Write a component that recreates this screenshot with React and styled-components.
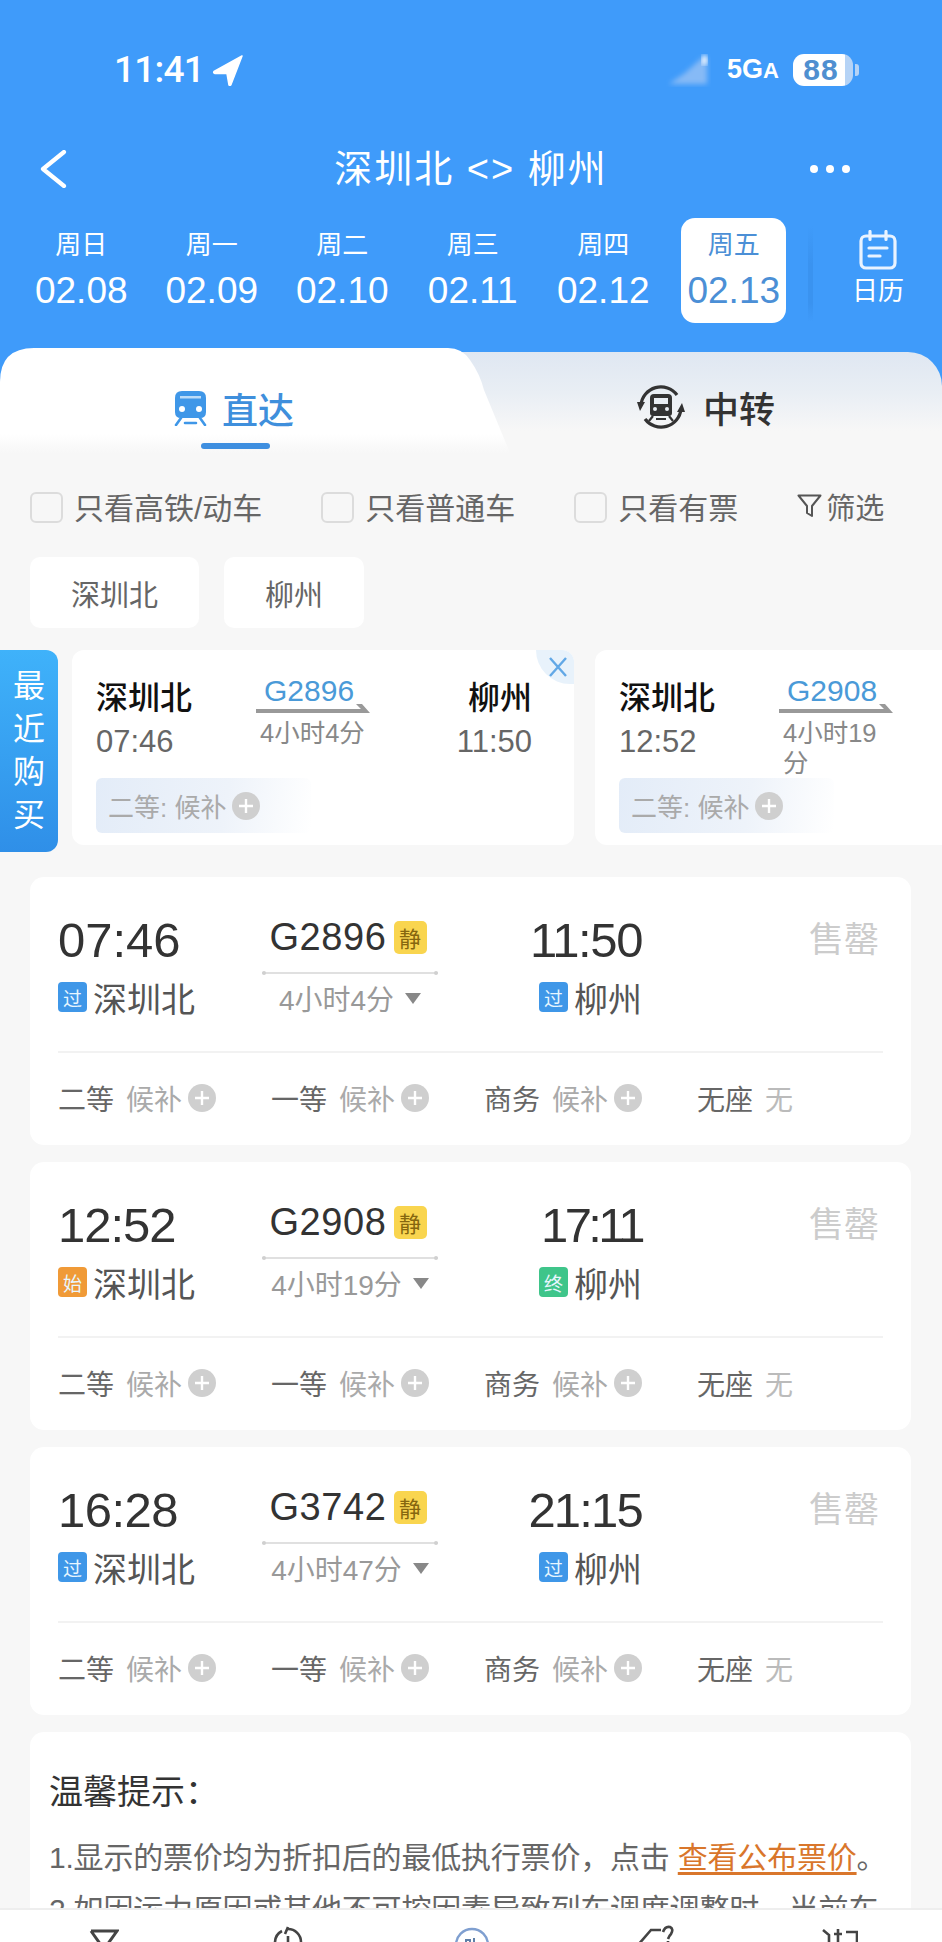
import React from "react";
import styled, { createGlobalStyle } from "styled-components";

const Global = createGlobalStyle`
  html, body { margin: 0; padding: 0; background: #f7f7f7; }
  * { box-sizing: border-box; }
  body { font-family: "Liberation Sans", "Noto Sans CJK SC", sans-serif; }
`;

const BLUE = "#3f9bfa";

const Page = styled.div`
  width: 942px;
  height: 1942px;
  display: flex;
  flex-direction: column;
  overflow: hidden;
  background: #f7f7f7;
`;
const Scroll = styled.div`
  flex: 1;
  min-height: 0;
  overflow: hidden;
`;
const Header = styled.header`
  background: ${BLUE};
  color: #fff;
  height: 348px;
`;
const StatusBar = styled.div`
  height: 134px;
  padding: 6px 89px 0 114px;
  display: flex;
  align-items: center;
`;
const Clock = styled.span`
  font-family: Roboto, sans-serif;
  font-weight: 500;
  font-size: 37px;
  letter-spacing: -0.8px;
  line-height: 40px;
`;
const StatusRight = styled.div`
  margin-left: auto;
  display: flex;
  align-items: center;
`;
const Network = styled.span`
  font-family: "Liberation Sans", sans-serif;
  font-weight: 700;
  font-size: 27px;
  line-height: 32px;
  margin-left: 14px;
  small { font-size: 22px; }
`;
const Battery = styled.div`
  position: relative;
  margin-left: 14px;
  width: 60px;
  height: 32px;
  border-radius: 11px;
  background: linear-gradient(90deg, #fff 87%, #b5d3f6 87%);
  color: #4f8fd0;
  font-weight: 700;
  font-size: 30px;
  letter-spacing: 1px;
  line-height: 32px;
  text-align: center;
  padding-right: 4px;
  &::after {
    content: "";
    position: absolute;
    right: -6px;
    top: 10px;
    width: 4px;
    height: 12px;
    border-radius: 0 3px 3px 0;
    background: #b5d3f6;
  }
`;
const Nav = styled.nav`
  height: 70px;
  padding: 0 39px;
  display: grid;
  grid-template-columns: 1fr auto 1fr;
  align-items: center;
`;
const Title = styled.h1`
  margin: 0;
  font-weight: 400;
  font-size: 38px;
  line-height: 50px;
  letter-spacing: 2px;
  white-space: nowrap;
`;
const Dots = styled.div`
  display: flex;
  justify-content: flex-end;
  gap: 8px;
  padding-right: 53px;
  span { width: 8px; height: 8px; border-radius: 50%; background: #fff; }
`;
const DateRow = styled.div`
  margin-top: 14px;
  padding-left: 16px;
  display: flex;
  align-items: flex-start;
`;
const DateCell = styled.div`
  width: 130.5px;
  display: flex;
  justify-content: center;
`;
const DateBox = styled.div`
  width: 105px;
  height: 105px;
  padding-top: 12px;
  border-radius: 14px;
  text-align: center;
  white-space: nowrap;
  display: flex;
  flex-direction: column;
  align-items: center;
  background: ${(p) => (p.$on ? "#fff" : "transparent")};
  color: ${(p) => (p.$on ? "#4b8fd6" : "#fff")};
`;
const Weekday = styled.span`
  font-size: 26px;
  line-height: 30px;
`;
const DateNum = styled.span`
  font-size: 37px;
  line-height: 40px;
  margin-top: 11px;
`;
const DateDivider = styled.div`
  width: 5px;
  height: 96px;
  margin: 8px 0 0 9px;
  background: linear-gradient(180deg, transparent, #3a93f0 40%, #3a93f0 80%, transparent);
`;
const Calendar = styled.div`
  margin: 12px 0 0 35px;
  width: 60px;
  display: flex;
  flex-direction: column;
  align-items: center;
  font-size: 26px;
  line-height: 30px;
  white-space: nowrap;
  svg { margin-bottom: 6px; }
`;

const TabsWrap = styled.div`
  height: 105px;
  background: linear-gradient(180deg, ${BLUE} 40px, #f7f7f7 40px);
  padding-top: 4px;
`;
const Tabs = styled.div`
  height: 101px;
  display: flex;
  border-radius: 34px 34px 0 0;
  background: linear-gradient(180deg, #dfe7f2 0%, #e9eef4 40%, #f7f7f7 78%);
`;
const ActiveTab = styled.div`
  width: 510px;
  height: 105px;
  margin-top: -4px;
  padding: 40px 0 0 174px;
  background: linear-gradient(180deg, #fff 82%, #f7f7f7 100%);
  clip-path: path("M0 105 L0 34 Q0 0 34 0 L448 0 Q462 0 470 12 Q480 26 484 42 L510 105 Z");
`;
const TabLabel = styled.div`
  display: flex;
  align-items: center;
  height: 40px;
  gap: ${(p) => p.$gap}px;
  font-size: 36px;
  font-weight: 500;
  color: ${(p) => (p.$on ? "#3f8fdc" : "#333")};
  white-space: nowrap;
`;
const TabLine = styled.div`
  width: 69px;
  height: 6px;
  margin: 15px 0 0 27px;
  border-radius: 3px;
  background: #3f8fe0;
`;
const IdleTab = styled.div`
  padding: 35px 0 0 127px;
`;

const Filters = styled.div`
  margin-top: 37px;
  padding-left: 30px;
  display: flex;
  align-items: center;
  gap: 59px;
  height: 31px;
`;
const FilterItem = styled.div`
  display: flex;
  align-items: center;
  gap: 11px;
  font-size: 30px;
  color: #666;
  white-space: nowrap;
`;
const Box = styled.span`
  width: 33px;
  height: 31px;
  margin-top: 3px;
  border: 2px solid #dcdcdc;
  border-radius: 6px;
  background: #f7f7f7;
`;
const FilterBtn = styled.div`
  display: flex;
  align-items: center;
  gap: 4px;
  font-size: 29px;
  color: #666;
  white-space: nowrap;
`;
const Chips = styled.div`
  margin: 36px 0 0 30px;
  display: flex;
  gap: 25px;
`;
const Chip = styled.div`
  height: 71px;
  padding: 0 41px;
  border-radius: 10px;
  background: #fff;
  color: #666;
  font-size: 29px;
  display: flex;
  align-items: center;
`;

const Recent = styled.section`
  margin-top: 22px;
  display: flex;
  align-items: flex-start;
  gap: 14px;
`;
const RecentTag = styled.div`
  flex: none;
  width: 58px;
  height: 202px;
  border-radius: 0 12px 12px 0;
  background: linear-gradient(180deg, #3fb2fa 0%, #2f8fe8 100%);
  color: #fff;
  font-size: 32px;
  line-height: 43px;
  display: flex;
  flex-direction: column;
  align-items: center;
  justify-content: center;
`;
const RecentList = styled.div`
  display: flex;
  gap: 21px;
`;
const RecentCard = styled.article`
  position: relative;
  flex: none;
  width: 502px;
  height: 195px;
  padding: 30px 0 0 24px;
  border-radius: 12px;
  background: #fff;
  overflow: hidden;
`;
const CloseCorner = styled.div`
  position: absolute;
  top: 0;
  right: 0;
  width: 38px;
  height: 34px;
  padding-left: 5px;
  border-bottom-left-radius: 34px;
  background: #e8f2fb;
  display: flex;
  align-items: center;
  justify-content: center;
`;
const RecentGrid = styled.div`
  height: 98px;
  display: grid;
  grid-template-columns: 160px 114px 162px;
`;
const RecentStop = styled.div`
  display: flex;
  flex-direction: column;
  align-items: ${(p) => (p.$end ? "flex-end" : "flex-start")};
`;
const RecentStation = styled.div`
  font-size: 32px;
  line-height: 36px;
  font-weight: 500;
  color: #111;
`;
const RecentTime = styled.div`
  font-size: 31px;
  line-height: 36px;
  margin-top: 8px;
  color: #666;
`;
const RecentMid = styled.div`
  display: flex;
  flex-direction: column;
`;
const RecentTrain = styled.div`
  margin: -1px 0 0 8px;
  font-size: 30px;
  line-height: 24px;
  color: #4a9ad8;
`;
const RecentDur = styled.div`
  margin-top: 4px;
  padding-left: 4px;
  font-size: 25.5px;
  line-height: 30px;
  color: #888;
`;
const SeatChip = styled.div`
  width: 215px;
  height: 55px;
  padding-left: 12px;
  border-radius: 6px;
  background: linear-gradient(100deg, #e3ecf8 0%, #eef3fa 60%, #fff 100%);
  font-size: 26px;
  color: #aaa;
  display: flex;
  align-items: center;
  gap: 6px;
  white-space: nowrap;
`;

const List = styled.section`
  margin-top: 25px;
  padding: 0 31px 0 30px;
  display: flex;
  flex-direction: column;
  gap: 17px;
`;
const Ticket = styled.article`
  padding: 40px 28px 37px;
  border-radius: 14px;
  background: #fff;
`;
const TicketTop = styled.div`
  display: grid;
  grid-template-columns: 204px 176px 204px 1fr;
`;
const Stop = styled.div`
  display: flex;
  flex-direction: column;
  align-items: ${(p) => (p.$end ? "flex-end" : "flex-start")};
`;
const BigTime = styled.div`
  font-size: 49px;
  line-height: 46px;
  letter-spacing: ${(p) => p.$track || 0}px;
  color: #333;
`;
const StationRow = styled.div`
  margin-top: 17px;
  height: 34px;
  display: flex;
  align-items: center;
  gap: 6px;
  font-size: 34px;
  color: #555;
`;
const StopBadge = styled.span`
  width: 29px;
  height: 30px;
  border-radius: 4px;
  background: ${(p) => p.$c};
  color: #e8f6ff;
  font-size: 19px;
  display: flex;
  align-items: center;
  justify-content: center;
`;
const Mid = styled.div`
  display: flex;
  flex-direction: column;
  align-items: center;
`;
const TrainRow = styled.div`
  height: 46px;
  display: flex;
  align-items: center;
  gap: 7px;
`;
const TrainNo = styled.span`
  font-size: 38px;
  letter-spacing: 0.6px;
  color: #333;
  margin: -6px 0 0 -4px;
`;
const QuietBadge = styled.span`
  width: 33px;
  height: 33px;
  border-radius: 5px;
  background: #f9d54f;
  color: #86660f;
  font-size: 22px;
  display: flex;
  align-items: center;
  justify-content: center;
  margin-top: -6px;
`;
const TrainLine = styled.div`
  position: relative;
  width: 100%;
  height: 2px;
  margin-top: 9px;
  background: #e0e0e0;
  &::before, &::after {
    content: "";
    position: absolute;
    top: -1px;
    width: 4px;
    height: 4px;
    border-radius: 50%;
    background: #d0d0d0;
  }
  &::before { left: 0; }
  &::after { right: 0; }
`;
const Duration = styled.div`
  margin-top: 7px;
  height: 34px;
  display: flex;
  align-items: center;
  gap: 11px;
  font-size: 28px;
  color: #999;
`;
const Caret = styled.span`
  width: 0;
  height: 0;
  border-left: 8px solid transparent;
  border-right: 8px solid transparent;
  border-top: 11px solid #888;
`;
const Sold = styled.div`
  text-align: right;
  padding-right: 4px;
  font-size: 35px;
  line-height: 46px;
  color: #ccc;
`;
const Rule = styled.div`
  height: 2px;
  margin-top: 36px;
  background: #f2f2f2;
`;
const Seats = styled.div`
  margin-top: 25px;
  height: 30px;
  display: grid;
  grid-template-columns: repeat(4, 213px);
`;
const Seat = styled.div`
  display: flex;
  align-items: center;
  font-size: 28px;
  color: #666;
  white-space: nowrap;
`;
const SeatState = styled.span`
  margin: 0 6px 0 12px;
  color: ${(p) => (p.$none ? "#bbb" : "#aaa")};
`;
const Tips = styled.section`
  padding: 38px 20px 0 19px;
  border-radius: 14px;
  background: #fff;
`;
const TipTitle = styled.h2`
  margin: 0;
  font-weight: 400;
  font-size: 34px;
  line-height: 44px;
  color: #333;
`;
const TipText = styled.div`
  margin-top: 18px;
  font-size: 30px;
  line-height: 52px;
  letter-spacing: -0.2px;
  color: #666;
  a {
    color: #d9762b;
    text-decoration: underline;
    text-underline-offset: 4px;
  }
`;
const TipLine = styled.div`
  white-space: nowrap;
`;
const TabBar = styled.footer`
  flex: none;
  height: 34px;
  padding: 0 10px 0 12px;
  background: #fff;
  border-top: 2px solid #eeeeee;
  display: grid;
  grid-template-columns: repeat(5, 184px);
  overflow: hidden;
`;
const TabCell = styled.div`
  display: flex;
  justify-content: center;
  padding-top: ${(p) => p.$top}px;
`;

const Plus = () => (
  <svg width="28" height="28" viewBox="0 0 28 28" style={{ flex: "none" }}>
    <circle cx="14" cy="14" r="14" fill="#cfcfcf" />
    <path d="M14 7v14M7 14h14" stroke="#fff" strokeWidth="2.4" />
  </svg>
);

const BackIcon = () => (
  <svg width="28" height="38" viewBox="0 0 28 38" fill="none">
    <path d="M25 2 L4 19 L25 36" stroke="#fff" strokeWidth="4.2" strokeLinecap="round" strokeLinejoin="round" />
  </svg>
);

const LocationIcon = () => (
  <svg width="32" height="32" viewBox="0 0 32 32" style={{ marginLeft: 8 }}>
    <path d="M30 2 L2 17.5 Q1 19 3 19.5 L15 19.5 L17 31 Q18 32 19 30.5 Z" fill="#fff" stroke="#fff" strokeWidth="1.5" strokeLinejoin="round" />
  </svg>
);

const SignalBlur = () => (
  <svg width="48" height="34" viewBox="0 0 48 34">
    <defs>
      <filter id="sb"><feGaussianBlur stdDeviation="2.4" /></filter>
    </defs>
    <path d="M4 31 L20 20 L38 4 L42 4 L42 31 Z" fill="#86baf6" filter="url(#sb)" />
    <rect x="37" y="2" width="5" height="10" rx="2.5" fill="#fff" filter="url(#sb)" />
  </svg>
);

const CalendarIcon = () => (
  <svg width="38" height="40" viewBox="0 0 38 40" fill="none" stroke="#e9f3ff" strokeWidth="3.2" strokeLinecap="round">
    <rect x="2" y="6" width="34" height="32" rx="5" />
    <path d="M11 1.5v8M27 1.5v8M10 18h18M10 26h11" />
  </svg>
);

const TrainIcon = () => (
  <svg width="33" height="35" viewBox="0 0 33 35">
    <path d="M8 0 H25 Q32 0 32 7 V21 Q32 27 26 27 H7 Q1 27 1 21 V7 Q1 0 8 0 Z" fill="#3f97e8" />
    <rect x="6" y="5" width="21" height="2.5" fill="#bcdcf8" />
    <circle cx="8" cy="18" r="3" fill="#fff" />
    <circle cx="25" cy="18" r="3" fill="#fff" />
    <path d="M7 27 L2 34 M26 27 L31 34 M11 32 H22" stroke="#3f97e8" strokeWidth="2.6" strokeLinecap="round" />
  </svg>
);

const TransferIcon = () => (
  <svg width="48" height="48" viewBox="0 0 48 48" fill="none">
    <path d="M4 22 A20 20 0 0 1 40 12" stroke="#333" strokeWidth="3.2" />
    <path d="M44 26 A20 20 0 0 1 8 36" stroke="#333" strokeWidth="3.2" />
    <path d="M0 19 L8 19 L3 28 Z M48 29 L40 29 L45 20 Z" fill="#333" />
    <path d="M17 11 H31 Q35 11 35 15 V30 Q35 33 32 33 H16 Q13 33 13 30 V15 Q13 11 17 11 Z" fill="#333" />
    <rect x="17" y="15" width="14" height="6" fill="#e9eef4" />
    <circle cx="18" cy="26" r="2" fill="#e9eef4" />
    <circle cx="30" cy="26" r="2" fill="#e9eef4" />
    <path d="M16 33 L12 38 M32 33 L36 38 M19 36 H29" stroke="#333" strokeWidth="2.2" />
  </svg>
);

const FunnelIcon = () => (
  <svg width="25" height="24" viewBox="0 0 25 24" fill="none">
    <path d="M1.5 1.5 H23.5 L15 12 V22 L10 19 V12 Z" stroke="#555" strokeWidth="2" strokeLinejoin="round" />
  </svg>
);

const RouteArrow = () => (
  <svg width="114" height="10" viewBox="0 0 114 10" style={{ display: "block", marginTop: 1 }}>
    <path d="M0 5 H105 L100 0 L106 0 L114 9 H0 Z" fill="#999" />
  </svg>
);

const CloseIcon = () => (
  <svg width="20" height="20" viewBox="0 0 20 20">
    <path d="M2 1 L18 19 M18 1 L2 19" stroke="#62a8e6" strokeWidth="2.4" />
  </svg>
);

const badgeColors = { 过: "#3f97e8", 始: "#f09a37", 终: "#3fc58a" };

const dates = [
  ["周日", "02.08"],
  ["周一", "02.09"],
  ["周二", "02.10"],
  ["周三", "02.11"],
  ["周四", "02.12"],
  ["周五", "02.13", true],
];

const recents = [
  { from: "07:46", to: "11:50", no: "G2896", dur: "4小时4分", close: true },
  { from: "12:52", to: "17:11", no: "G2908", dur: "4小时19分" },
];

const tickets = [
  { from: "07:46", to: "11:50", toTrack: -1.4, no: "G2896", dur: "4小时4分", a: "过", b: "过" },
  { from: "12:52", fromTrack: -1, to: "17:11", toTrack: -3.6, no: "G2908", dur: "4小时19分", a: "始", b: "终" },
  { from: "16:28", fromTrack: -0.5, to: "21:15", toTrack: -1.8, no: "G3742", dur: "4小时47分", a: "过", b: "过" },
];

const seats = ["二等", "一等", "商务"];

export default function App() {
  return (
    <Page>
      <Global />
      <Scroll>
        <Header>
          <StatusBar>
            <Clock>11:41</Clock>
            <LocationIcon />
            <StatusRight>
              <SignalBlur />
              <Network>
                5G<small>A</small>
              </Network>
              <Battery>88</Battery>
            </StatusRight>
          </StatusBar>
          <Nav>
            <BackIcon />
            <Title>深圳北 &lt;&gt; 柳州</Title>
            <Dots>
              <span />
              <span />
              <span />
            </Dots>
          </Nav>
          <DateRow>
            {dates.map(([w, d, on]) => (
              <DateCell key={d}>
                <DateBox $on={on}>
                  <Weekday>{w}</Weekday>
                  <DateNum>{d}</DateNum>
                </DateBox>
              </DateCell>
            ))}
            <DateDivider />
            <Calendar>
              <CalendarIcon />
              日历
            </Calendar>
          </DateRow>
        </Header>

        <TabsWrap>
          <Tabs>
            <ActiveTab>
              <TabLabel $on $gap={15}>
                <TrainIcon />
                直达
              </TabLabel>
              <TabLine />
            </ActiveTab>
            <IdleTab>
              <TabLabel $gap={18}>
                <TransferIcon />
                中转
              </TabLabel>
            </IdleTab>
          </Tabs>
        </TabsWrap>

        <Filters>
          <FilterItem>
            <Box />
            只看高铁/动车
          </FilterItem>
          <FilterItem>
            <Box />
            只看普通车
          </FilterItem>
          <FilterItem>
            <Box />
            只看有票
          </FilterItem>
          <FilterBtn>
            <FunnelIcon />
            筛选
          </FilterBtn>
        </Filters>

        <Chips>
          <Chip>深圳北</Chip>
          <Chip>柳州</Chip>
        </Chips>

        <Recent>
          <RecentTag>
            <span>最</span>
            <span>近</span>
            <span>购</span>
            <span>买</span>
          </RecentTag>
          <RecentList>
            {recents.map((r) => (
              <RecentCard key={r.no}>
                {r.close && (
                  <CloseCorner>
                    <CloseIcon />
                  </CloseCorner>
                )}
                <RecentGrid>
                  <RecentStop>
                    <RecentStation>深圳北</RecentStation>
                    <RecentTime>{r.from}</RecentTime>
                  </RecentStop>
                  <RecentMid>
                    <RecentTrain>{r.no}</RecentTrain>
                    <RouteArrow />
                    <RecentDur>{r.dur}</RecentDur>
                  </RecentMid>
                  <RecentStop $end>
                    <RecentStation>柳州</RecentStation>
                    <RecentTime>{r.to}</RecentTime>
                  </RecentStop>
                </RecentGrid>
                <SeatChip>
                  二等: 候补
                  <Plus />
                </SeatChip>
              </RecentCard>
            ))}
          </RecentList>
        </Recent>

        <List>
          {tickets.map((t) => (
            <Ticket key={t.no}>
              <TicketTop>
                <Stop>
                  <BigTime $track={t.fromTrack}>{t.from}</BigTime>
                  <StationRow>
                    <StopBadge $c={badgeColors[t.a]}>{t.a}</StopBadge>
                    深圳北
                  </StationRow>
                </Stop>
                <Mid>
                  <TrainRow>
                    <TrainNo>{t.no}</TrainNo>
                    <QuietBadge>静</QuietBadge>
                  </TrainRow>
                  <TrainLine />
                  <Duration>
                    {t.dur}
                    <Caret />
                  </Duration>
                </Mid>
                <Stop $end>
                  <BigTime $track={t.toTrack}>{t.to}</BigTime>
                  <StationRow>
                    <StopBadge $c={badgeColors[t.b]}>{t.b}</StopBadge>
                    柳州
                  </StationRow>
                </Stop>
                <Sold>售罄</Sold>
              </TicketTop>
              <Rule />
              <Seats>
                {seats.map((s) => (
                  <Seat key={s}>
                    {s}
                    <SeatState>候补</SeatState>
                    <Plus />
                  </Seat>
                ))}
                <Seat>
                  无座
                  <SeatState $none>无</SeatState>
                </Seat>
              </Seats>
            </Ticket>
          ))}
          <Tips>
            <TipTitle>温馨提示：</TipTitle>
            <TipText>
              <TipLine>
                1.显示的票价均为折扣后的最低执行票价，点击 <a>查看公布票价</a>。
              </TipLine>
              <TipLine>2.如因运力原因或其他不可控因素导致列车调度调整时，当前车</TipLine>
            </TipText>
          </Tips>
        </List>
      </Scroll>
      <TabBar>
        <TabCell $top={19}>
          <svg width="30" height="30" viewBox="0 0 30 30" fill="none">
            <path d="M2 2 H28 L18 16 V28 M12 28 V16 L2 2" stroke="#444" strokeWidth="3" />
          </svg>
        </TabCell>
        <TabCell $top={16}>
          <svg width="32" height="32" viewBox="0 0 32 32" fill="none">
            <path d="M3 16 A13 13 0 0 1 10 5 M16 3 A13 13 0 0 1 29 16" stroke="#444" strokeWidth="2.6" />
            <path d="M16 1 L13 8 M16 10 V16" stroke="#444" strokeWidth="2.6" />
          </svg>
        </TabCell>
        <TabCell $top={17}>
          <svg width="36" height="36" viewBox="0 0 36 36" fill="none">
            <circle cx="18" cy="18" r="16" stroke="#7f9fd0" strokeWidth="2.4" />
            <path d="M12 13 h4 v3 h-4 z M20 11 v6" stroke="#5f7fa8" strokeWidth="2" />
          </svg>
        </TabCell>
        <TabCell $top={15}>
          <svg width="38" height="32" viewBox="0 0 38 32" fill="none">
            <path d="M1 20 L14 5 L24 5 M26 7 Q28 1 33 2 Q37 4 34 9 Q32 11 31 14 M31 16 V19" stroke="#444" strokeWidth="2.6" />
          </svg>
        </TabCell>
        <TabCell $top={19}>
          <svg width="36" height="30" viewBox="0 0 36 30" fill="none">
            <path d="M1 1 L7 6 V30 M12 5 H20 M16 0 V30 M24 3 H35 V30" stroke="#444" strokeWidth="2.6" />
          </svg>
        </TabCell>
      </TabBar>
    </Page>
  );
}
